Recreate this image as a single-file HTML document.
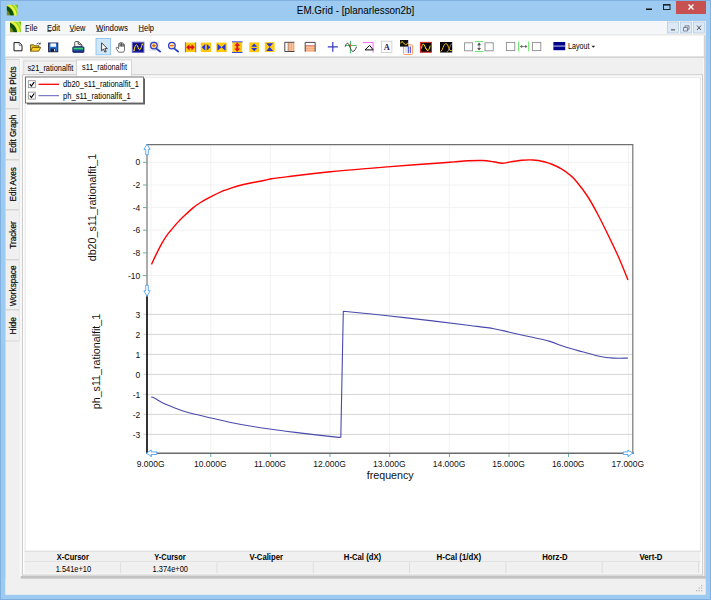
<!DOCTYPE html>
<html><head><meta charset="utf-8"><title>EM.Grid - [planarlesson2b]</title>
<style>
html,body{margin:0;padding:0;background:#9ccaf1;overflow:hidden}
svg{display:block}
text{font-family:"Liberation Sans",sans-serif;fill:#000}
.ui{font-size:8.6px}
.ax{font-size:8.5px;fill:#111}
.lb{font-size:10.7px;fill:#111}
.b{font-weight:bold}
</style></head><body>
<svg width="711" height="600" viewBox="0 0 711 600">

<rect x="0" y="0" width="711" height="600" fill="#9ccaf1"/>
<rect x="0.5" y="0.5" width="710" height="599" fill="none" stroke="#7fb0e0" stroke-width="1"/>
<rect x="5.5" y="21" width="700" height="573.5" fill="#f0f0f0"/>
<text x="296.8" y="14.3" font-size="10.2" fill="#2a2a2a" textLength="117.5" lengthAdjust="spacingAndGlyphs">EM.Grid - [planarlesson2b]</text>
<rect x="676" y="1" width="30" height="13" fill="#c75050"/>
<path d="M688.5 4.5l5 5m0-5l-5 5" stroke="#fff" stroke-width="1.4" fill="none"/>
<rect x="663.5" y="4.5" width="6.5" height="5" fill="none" stroke="#222" stroke-width="1"/><rect x="663.5" y="4.2" width="6.5" height="1.4" fill="#222"/>
<rect x="646" y="8.5" width="6" height="1.5" fill="#111"/>
<rect x="5.5" y="21" width="700" height="14" fill="#f5f6f7"/><rect x="5.5" y="34.5" width="700" height="1.1" fill="#dcdcdc"/>
<rect x="5.5" y="35.5" width="699" height="21.5" fill="#fff"/>
<rect x="5.5" y="56.5" width="700" height="1.2" fill="#c8c8c8"/><rect x="703.8" y="35.5" width="1.4" height="22" fill="#d0d0d0"/>
<text class="ui" x="25" y="30.7" fill="#1a1a1a" textLength="12.5" lengthAdjust="spacingAndGlyphs">File</text>
<rect x="25.3" y="31.3" width="3.6" height="0.7" fill="#333"/>
<text class="ui" x="47" y="30.7" fill="#1a1a1a" textLength="13" lengthAdjust="spacingAndGlyphs">Edit</text>
<rect x="47.3" y="31.3" width="3.8" height="0.7" fill="#333"/>
<text class="ui" x="69.5" y="30.7" fill="#1a1a1a" textLength="16" lengthAdjust="spacingAndGlyphs">View</text>
<rect x="69.8" y="31.3" width="4.6" height="0.7" fill="#333"/>
<text class="ui" x="96" y="30.7" fill="#1a1a1a" textLength="32" lengthAdjust="spacingAndGlyphs">Windows</text>
<rect x="96.3" y="31.3" width="7.2" height="0.7" fill="#333"/>
<text class="ui" x="138.5" y="30.7" fill="#1a1a1a" textLength="15.5" lengthAdjust="spacingAndGlyphs">Help</text>
<rect x="138.8" y="31.3" width="5" height="0.7" fill="#333"/>
<rect x="667.5" y="22" width="11" height="11" fill="#dbe8f5" stroke="#b9cde0" stroke-width="0.8"/>
<rect x="680.5" y="22" width="11" height="11" fill="#dbe8f5" stroke="#b9cde0" stroke-width="0.8"/>
<rect x="693.5" y="22" width="11" height="11" fill="#dbe8f5" stroke="#b9cde0" stroke-width="0.8"/>
<rect x="671" y="29.3" width="4" height="1.1" fill="#555"/>
<path d="M683.5 27.5h4v3.5h-4zM685 27.5v-1.7h4v3.5h-1.5" fill="none" stroke="#667" stroke-width="0.75"/>
<path d="M697 25.5l4 4.5m0-4.5l-4 4.5" stroke="#555" stroke-width="1" fill="none"/>
<rect x="5.5" y="59.5" width="14" height="49.0" fill="#f0f0f0" stroke="#d2d2d2" stroke-width="0.8"/>
<text class="ui" transform="translate(16,101.25) rotate(-90)" font-size="9" fill="#111" stroke="#111" stroke-width="0.2" textLength="35" lengthAdjust="spacingAndGlyphs">Edit Plots</text>
<rect x="5.5" y="109" width="14" height="50.5" fill="#f0f0f0" stroke="#d2d2d2" stroke-width="0.8"/>
<text class="ui" transform="translate(16,153.1) rotate(-90)" font-size="9" fill="#111" stroke="#111" stroke-width="0.2" textLength="38.4" lengthAdjust="spacingAndGlyphs">Edit Graph</text>
<rect x="5.5" y="160" width="14" height="49.5" fill="#f0f0f0" stroke="#d2d2d2" stroke-width="0.8"/>
<text class="ui" transform="translate(16,201.4) rotate(-90)" font-size="9" fill="#111" stroke="#111" stroke-width="0.2" textLength="34.2" lengthAdjust="spacingAndGlyphs">Edit Axes</text>
<rect x="5.5" y="210" width="14" height="49.5" fill="#f0f0f0" stroke="#d2d2d2" stroke-width="0.8"/>
<text class="ui" transform="translate(16,248.75) rotate(-90)" font-size="9" fill="#111" stroke="#111" stroke-width="0.2" textLength="27.5" lengthAdjust="spacingAndGlyphs">Tracker</text>
<rect x="5.5" y="260" width="14" height="49.5" fill="#f0f0f0" stroke="#d2d2d2" stroke-width="0.8"/>
<text class="ui" transform="translate(16,306.25) rotate(-90)" font-size="9" fill="#111" stroke="#111" stroke-width="0.2" textLength="40.7" lengthAdjust="spacingAndGlyphs">Workspace</text>
<rect x="5.5" y="310" width="14" height="31" fill="#f0f0f0" stroke="#d2d2d2" stroke-width="0.8"/>
<text class="ui" transform="translate(16,334.5) rotate(-90)" font-size="9" fill="#111" stroke="#111" stroke-width="0.2" textLength="17.5" lengthAdjust="spacingAndGlyphs">Hide</text>
<rect x="19.6" y="58" width="686" height="518" fill="#f0f0f0"/>
<rect x="19.8" y="58" width="2.2" height="518" fill="#f9f9f9"/>
<rect x="703.2" y="58" width="1.3" height="518" fill="#fafafa"/>
<rect x="704.4" y="57.5" width="1.2" height="521.5" fill="#c2c2c2"/>
<rect x="23.8" y="61" width="53" height="14" fill="#f0f0f0" stroke="#d6d6d6" stroke-width="0.9"/>
<rect x="22.4" y="74.8" width="680.2" height="500.2" fill="#fff" stroke="#c6c6c6" stroke-width="0.9"/>
<rect x="25.1" y="77.2" width="675.4" height="474" fill="#fff" stroke="#e6e6e6" stroke-width="1"/>
<rect x="76.6" y="59.9" width="54.8" height="16" fill="#fff" stroke="#cfcfcf" stroke-width="0.9"/><rect x="77.1" y="74" width="53.8" height="2.6" fill="#fff"/>
<text class="ui" x="27.4" y="70.7" font-size="7.1" fill="#222" textLength="46" lengthAdjust="spacingAndGlyphs">s21_rationalfit</text>
<text class="ui" x="82" y="69.8" font-size="7.1" fill="#111" textLength="45" lengthAdjust="spacingAndGlyphs">s11_rationalfit</text>
<rect x="27" y="78.5" width="118" height="26" fill="#3a3a3a" opacity="0.8"/>
<rect x="25.5" y="77" width="118" height="26" fill="#fff" stroke="#666" stroke-width="0.9"/>
<rect x="28.3" y="80.7" width="7" height="7" fill="#fff" stroke="#8a8a8a" stroke-width="0.8"/>
<path d="M29.8 84.1 l1.6 2 l2.8 -4" fill="none" stroke="#000" stroke-width="1.2"/>
<line x1="38.5" x2="59" y1="84.3" y2="84.3" stroke="#ff0000" stroke-width="1.3"/>
<text class="ui" x="63" y="87.39999999999999" font-size="7.1" fill="#2a2a2a" textLength="76" lengthAdjust="spacingAndGlyphs">db20_s11_rationalfit_1</text>
<rect x="28.3" y="92.10000000000001" width="7" height="7" fill="#fff" stroke="#8a8a8a" stroke-width="0.8"/>
<path d="M29.8 95.5 l1.6 2 l2.8 -4" fill="none" stroke="#000" stroke-width="1.2"/>
<line x1="38.5" x2="59" y1="95.7" y2="95.7" stroke="#5555bb" stroke-width="0.95"/>
<text class="ui" x="63" y="98.8" font-size="7.1" fill="#2a2a2a" textLength="67.6" lengthAdjust="spacingAndGlyphs">ph_s11_rationalfit_1</text>
<line x1="151.1" x2="151.1" y1="145" y2="453" stroke="#f0f0f0" stroke-width="0.9"/>
<line x1="210.8" x2="210.8" y1="145" y2="453" stroke="#f0f0f0" stroke-width="0.9"/>
<line x1="270.4" x2="270.4" y1="145" y2="453" stroke="#f0f0f0" stroke-width="0.9"/>
<line x1="330.0" x2="330.0" y1="145" y2="453" stroke="#f0f0f0" stroke-width="0.9"/>
<line x1="389.7" x2="389.7" y1="145" y2="453" stroke="#f0f0f0" stroke-width="0.9"/>
<line x1="449.4" x2="449.4" y1="145" y2="453" stroke="#f0f0f0" stroke-width="0.9"/>
<line x1="509.0" x2="509.0" y1="145" y2="453" stroke="#f0f0f0" stroke-width="0.9"/>
<line x1="568.6" x2="568.6" y1="145" y2="453" stroke="#f0f0f0" stroke-width="0.9"/>
<line x1="628.3" x2="628.3" y1="145" y2="453" stroke="#f0f0f0" stroke-width="0.9"/>
<line x1="147" x2="633" y1="162.3" y2="162.3" stroke="#f1f1f1" stroke-width="0.9"/>
<line x1="143" x2="146.5" y1="162.3" y2="162.3" stroke="#4aa9a0" stroke-width="0.9"/>
<line x1="147" x2="633" y1="185.0" y2="185.0" stroke="#f1f1f1" stroke-width="0.9"/>
<line x1="143" x2="146.5" y1="185.0" y2="185.0" stroke="#4aa9a0" stroke-width="0.9"/>
<line x1="147" x2="633" y1="207.6" y2="207.6" stroke="#f1f1f1" stroke-width="0.9"/>
<line x1="143" x2="146.5" y1="207.6" y2="207.6" stroke="#4aa9a0" stroke-width="0.9"/>
<line x1="147" x2="633" y1="230.2" y2="230.2" stroke="#f1f1f1" stroke-width="0.9"/>
<line x1="143" x2="146.5" y1="230.2" y2="230.2" stroke="#4aa9a0" stroke-width="0.9"/>
<line x1="147" x2="633" y1="252.9" y2="252.9" stroke="#f1f1f1" stroke-width="0.9"/>
<line x1="143" x2="146.5" y1="252.9" y2="252.9" stroke="#4aa9a0" stroke-width="0.9"/>
<line x1="147" x2="633" y1="275.6" y2="275.6" stroke="#f1f1f1" stroke-width="0.9"/>
<line x1="143" x2="146.5" y1="275.6" y2="275.6" stroke="#4aa9a0" stroke-width="0.9"/>
<line x1="143.5" x2="633" y1="314.4" y2="314.4" stroke="#cfcfcf" stroke-width="0.9"/>
<line x1="143.5" x2="633" y1="334.4" y2="334.4" stroke="#cfcfcf" stroke-width="0.9"/>
<line x1="143.5" x2="633" y1="354.4" y2="354.4" stroke="#cfcfcf" stroke-width="0.9"/>
<line x1="143.5" x2="633" y1="374.4" y2="374.4" stroke="#cfcfcf" stroke-width="0.9"/>
<line x1="143.5" x2="633" y1="394.4" y2="394.4" stroke="#cfcfcf" stroke-width="0.9"/>
<line x1="143.5" x2="633" y1="414.4" y2="414.4" stroke="#cfcfcf" stroke-width="0.9"/>
<line x1="143.5" x2="633" y1="434.4" y2="434.4" stroke="#cfcfcf" stroke-width="0.9"/>
<path d="M147 297 V144.6 H632.8 V453" fill="none" stroke="#707070" stroke-width="1.15"/>
<line x1="147" x2="147" y1="296.5" y2="453.5" stroke="#000" stroke-width="1.6"/>
<line x1="146.2" x2="633.8" y1="453.2" y2="453.2" stroke="#6a6a6a" stroke-width="1.5"/>
<line x1="151.1" x2="151.1" y1="454" y2="457" stroke="#4aa9a0" stroke-width="0.9"/>
<line x1="210.8" x2="210.8" y1="454" y2="457" stroke="#4aa9a0" stroke-width="0.9"/>
<line x1="270.4" x2="270.4" y1="454" y2="457" stroke="#4aa9a0" stroke-width="0.9"/>
<line x1="330.0" x2="330.0" y1="454" y2="457" stroke="#4aa9a0" stroke-width="0.9"/>
<line x1="389.7" x2="389.7" y1="454" y2="457" stroke="#4aa9a0" stroke-width="0.9"/>
<line x1="449.4" x2="449.4" y1="454" y2="457" stroke="#4aa9a0" stroke-width="0.9"/>
<line x1="509.0" x2="509.0" y1="454" y2="457" stroke="#4aa9a0" stroke-width="0.9"/>
<line x1="568.6" x2="568.6" y1="454" y2="457" stroke="#4aa9a0" stroke-width="0.9"/>
<line x1="628.3" x2="628.3" y1="454" y2="457" stroke="#4aa9a0" stroke-width="0.9"/>
<text class="ax" x="140.3" y="165.4" text-anchor="end">0</text>
<text class="ax" x="140.3" y="188.1" text-anchor="end">-2</text>
<text class="ax" x="140.3" y="210.7" text-anchor="end">-4</text>
<text class="ax" x="140.3" y="233.3" text-anchor="end">-6</text>
<text class="ax" x="140.3" y="256.0" text-anchor="end">-8</text>
<text class="ax" x="140.3" y="278.7" text-anchor="end">-10</text>
<text class="ax" x="140.3" y="317.5" text-anchor="end">3</text>
<text class="ax" x="140.3" y="337.5" text-anchor="end">2</text>
<text class="ax" x="140.3" y="357.5" text-anchor="end">1</text>
<text class="ax" x="140.3" y="377.5" text-anchor="end">0</text>
<text class="ax" x="140.3" y="397.5" text-anchor="end">-1</text>
<text class="ax" x="140.3" y="417.5" text-anchor="end">-2</text>
<text class="ax" x="140.3" y="437.5" text-anchor="end">-3</text>
<text class="ax" x="150.7" y="466.9" text-anchor="middle">9.000G</text>
<text class="ax" x="210.3" y="466.9" text-anchor="middle">10.000G</text>
<text class="ax" x="270.0" y="466.9" text-anchor="middle">11.000G</text>
<text class="ax" x="329.6" y="466.9" text-anchor="middle">12.000G</text>
<text class="ax" x="389.3" y="466.9" text-anchor="middle">13.000G</text>
<text class="ax" x="449.0" y="466.9" text-anchor="middle">14.000G</text>
<text class="ax" x="508.6" y="466.9" text-anchor="middle">15.000G</text>
<text class="ax" x="568.2" y="466.9" text-anchor="middle">16.000G</text>
<text class="ax" x="627.9" y="466.9" text-anchor="middle">17.000G</text>
<text class="lb" x="390.2" y="479.3" text-anchor="middle" font-size="11.4">frequency</text>
<text class="lb" transform="translate(96,207.6) rotate(-90)" text-anchor="middle">db20_s11_rationalfit_1</text>
<text class="lb" transform="translate(99.9,361.5) rotate(-90)" text-anchor="middle">ph_s11_rationalfit_1</text>
<path d="M151.50 264.40 C152.22 262.85 154.17 258.45 155.80 255.10 C157.43 251.75 159.48 247.55 161.30 244.30 C163.12 241.05 165.08 237.95 166.70 235.60 C168.32 233.25 169.20 232.37 171.00 230.20 C172.80 228.03 175.33 224.95 177.50 222.60 C179.67 220.25 181.47 218.52 184.00 216.10 C186.53 213.68 189.82 210.45 192.70 208.10 C195.58 205.75 198.23 203.92 201.30 202.00 C204.37 200.08 207.85 198.30 211.10 196.60 C214.35 194.90 217.37 193.25 220.80 191.80 C224.23 190.35 228.08 189.08 231.70 187.90 C235.32 186.72 238.90 185.60 242.50 184.70 C246.10 183.80 249.55 183.23 253.30 182.50 C257.05 181.77 262.00 180.92 265.00 180.30 C268.00 179.68 267.45 179.42 271.30 178.80 C275.15 178.18 278.27 177.77 288.10 176.60 C297.93 175.43 316.23 173.22 330.30 171.80 C344.37 170.38 358.43 169.27 372.50 168.10 C386.57 166.93 403.45 165.65 414.70 164.80 C425.95 163.95 433.45 163.48 440.00 163.00 C446.55 162.52 449.32 162.27 454.00 161.90 C458.68 161.53 463.40 161.03 468.10 160.80 C472.80 160.57 477.98 160.35 482.20 160.50 C486.42 160.65 490.12 161.23 493.40 161.70 C496.68 162.17 499.08 163.27 501.90 163.30 C504.72 163.33 507.02 162.40 510.30 161.90 C513.58 161.40 517.85 160.62 521.60 160.30 C525.35 159.98 529.05 159.77 532.80 160.00 C536.55 160.23 540.82 160.95 544.10 161.70 C547.38 162.45 549.68 163.33 552.50 164.50 C555.32 165.67 558.08 166.95 561.00 168.70 C563.92 170.45 567.46 172.91 570.00 175.00 C572.54 177.09 573.33 177.71 576.25 181.25 C579.17 184.79 583.96 190.83 587.50 196.25 C591.04 201.67 593.96 207.08 597.50 213.75 C601.04 220.42 605.21 228.96 608.75 236.25 C612.29 243.54 615.54 250.21 618.75 257.50 C621.96 264.79 626.46 276.25 628.00 280.00" fill="none" stroke="#ff0000" stroke-width="1.4" stroke-linejoin="round"/>
<path d="M151.20 396.90 C151.80 397.13 153.02 397.37 154.80 398.30 C156.58 399.23 158.85 401.00 161.90 402.50 C164.95 404.00 168.88 405.67 173.10 407.30 C177.32 408.93 180.87 410.52 187.20 412.30 C193.53 414.08 204.07 416.35 211.10 418.00 C218.13 419.65 221.67 420.65 229.40 422.20 C237.13 423.75 248.13 425.80 257.50 427.30 C266.87 428.80 276.22 429.98 285.60 431.20 C294.98 432.42 305.35 433.62 313.80 434.60 C322.25 435.58 331.80 436.65 336.30 437.10 C340.80 437.55 340.05 437.27 340.80 437.30 L343.30 311.20 C350.67 311.95 372.63 314.08 387.50 315.70 C402.37 317.32 418.75 319.27 432.50 320.90 C446.25 322.53 459.77 324.20 470.00 325.50 C480.23 326.80 487.32 327.58 493.90 328.70 C500.48 329.82 503.52 330.85 509.50 332.20 C515.48 333.55 523.23 335.32 529.80 336.80 C536.37 338.28 542.93 339.38 548.90 341.10 C554.87 342.82 560.02 345.32 565.60 347.10 C571.18 348.88 576.82 350.28 582.40 351.80 C587.98 353.32 593.92 355.15 599.10 356.20 C604.28 357.25 608.72 357.78 613.50 358.10 C618.28 358.42 625.42 358.10 627.80 358.10" fill="none" stroke="#4a4aac" stroke-width="1.1" stroke-linejoin="round"/>
<path d="M147 144.2 l3.1 5.2 h-1.8 v5.4 h-2.6 v-5.4 h-1.8z" fill="#fff" stroke="#3c96f5" stroke-width="0.8"/>
<path d="M147 296.2 l3.1 -5.4 h-1.8 v-5.6 h-2.6 v5.6 h-1.8z" fill="#fff" stroke="#3c96f5" stroke-width="0.8"/>
<path d="M146.3 453.2 l5 -3.1 v1.8 h5.5 v2.6 h-5.5 v1.8z" fill="#fff" stroke="#3c96f5" stroke-width="0.8"/>
<path d="M633 453.2 l-5 -3.1 v1.8 h-4.8 v2.6 h4.8 v1.8z" fill="#fff" stroke="#3c96f5" stroke-width="0.8"/>
<rect x="24.4" y="551.2" width="676.2" height="22.4" fill="#f0f0f0"/>
<rect x="24.4" y="561.1" width="676.2" height="0.9" fill="#e0e0e0"/>
<rect x="24.4" y="550.8" width="676.2" height="0.9" fill="#dadada"/>
<text class="ui b" x="56.8" y="559.8" font-size="8.2" fill="#222" textLength="32" lengthAdjust="spacingAndGlyphs">X-Cursor</text>
<rect x="120.2" y="562.3" width="0.9" height="11" fill="#dcdcdc"/>
<text class="ui b" x="154.3" y="559.8" font-size="8.2" fill="#222" textLength="31.4" lengthAdjust="spacingAndGlyphs">Y-Cursor</text>
<rect x="216.5" y="562.3" width="0.9" height="11" fill="#dcdcdc"/>
<text class="ui b" x="249.6" y="559.8" font-size="8.2" fill="#222" textLength="33.4" lengthAdjust="spacingAndGlyphs">V-Caliper</text>
<rect x="312.8" y="562.3" width="0.9" height="11" fill="#dcdcdc"/>
<text class="ui b" x="343.8" y="559.8" font-size="8.2" fill="#222" textLength="37.4" lengthAdjust="spacingAndGlyphs">H-Cal (dX)</text>
<rect x="409.1" y="562.3" width="0.9" height="11" fill="#dcdcdc"/>
<text class="ui b" x="436.6" y="559.8" font-size="8.2" fill="#222" textLength="44.6" lengthAdjust="spacingAndGlyphs">H-Cal (1/dX)</text>
<rect x="505.4" y="562.3" width="0.9" height="11" fill="#dcdcdc"/>
<text class="ui b" x="542.2" y="559.8" font-size="8.2" fill="#222" textLength="25.4" lengthAdjust="spacingAndGlyphs">Horz-D</text>
<rect x="601.7" y="562.3" width="0.9" height="11" fill="#dcdcdc"/>
<text class="ui b" x="639.5" y="559.8" font-size="8.2" fill="#222" textLength="23" lengthAdjust="spacingAndGlyphs">Vert-D</text>
<rect x="698.0" y="562.3" width="0.9" height="11" fill="#dcdcdc"/>
<text class="ui" x="55.7" y="571.8" font-size="8.6" textLength="35.4" lengthAdjust="spacingAndGlyphs">1.541e+10</text>
<text class="ui" x="152.6" y="571.8" font-size="8.6" textLength="35.4" lengthAdjust="spacingAndGlyphs">1.374e+00</text>
<rect x="20.8" y="575.9" width="684.8" height="2.9" fill="#c2c2c2"/>
<rect x="5.5" y="578.8" width="700" height="15.8" fill="#f0f0f0"/>
<g fill="#bdbdbd"><rect x="701" y="590" width="1.3" height="1.3"/><rect x="698.5" y="590" width="1.3" height="1.3"/><rect x="701" y="587.5" width="1.3" height="1.3"/><rect x="696" y="590" width="1.3" height="1.3"/><rect x="698.5" y="587.5" width="1.3" height="1.3"/><rect x="701" y="585" width="1.3" height="1.3"/></g>
<defs><radialGradient id="lg" gradientUnits="userSpaceOnUse" cx="-4" cy="11.5" r="19"><stop offset="0" stop-color="#9aa428"/><stop offset="0.36" stop-color="#6f8418"/><stop offset="0.43" stop-color="#0c4a10"/><stop offset="0.56" stop-color="#0a5210"/><stop offset="0.61" stop-color="#d8ea2c"/><stop offset="0.70" stop-color="#f6f84a"/><stop offset="0.76" stop-color="#8ed21a"/><stop offset="0.84" stop-color="#c4ee58"/><stop offset="0.90" stop-color="#7cc814"/><stop offset="1" stop-color="#5eb00c"/></radialGradient></defs>
<g transform="translate(6.8,4.8)"><rect x="0" y="0" width="11" height="10.6" fill="url(#lg)"/></g>
<g transform="translate(10,21.6)"><rect x="0" y="0" width="11" height="10.6" fill="url(#lg)"/></g>
<rect x="96" y="38.5" width="14.6" height="16.3" fill="#cde6f8" stroke="#8fc3ee" stroke-width="0.9"/>
<path d="M14 42.6h5.4l2.6 2.6v5.6h-8z" fill="#fff" stroke="#1a1a1a" stroke-width="1"/><path d="M19.2 42.8v2.6h2.6" fill="none" stroke="#555" stroke-width="0.7"/>
<path d="M30.5 51.2v-6.4h3.2l1 1h4.3v1.6" fill="#f0c010" stroke="#5a4708" stroke-width="0.8"/><path d="M30.5 51.2l2-3.8h8.3l-2.2 3.8z" fill="#ffd428" stroke="#5a4708" stroke-width="0.8"/><path d="M36.5 44q2-1.8 3.6-0.3m0.2-1.2v1.6h-1.6" fill="none" stroke="#333" stroke-width="0.7"/>
<rect x="48.6" y="43" width="9.2" height="8.8" fill="#2a6fd0" stroke="#101840" stroke-width="0.9"/><rect x="50.4" y="43.4" width="5.6" height="3.4" fill="#f2f6ff"/><rect x="50.6" y="48.6" width="5" height="3" fill="#1a1a30"/><rect x="54" y="49.2" width="1.2" height="2" fill="#e8e8f0"/>
<path d="M74.7 46.8v-4.3q0-1 1-1h2.6l3.7 3.4v1.9z" fill="#f2f2f2" stroke="#3a3a3a" stroke-width="0.8"/><path d="M78.2 41.8v2.2l3.4 1.2" fill="none" stroke="#222" stroke-width="0.8"/><rect x="72.7" y="46.8" width="11.3" height="5.7" rx="0.9" fill="#1c2c92" stroke="#16205a" stroke-width="0.7"/><rect x="73.5" y="47.6" width="9.7" height="1.6" fill="#34d674"/><rect x="73.5" y="49.2" width="9.7" height="1.2" fill="#1f8a80"/>
<path d="M101.6 42.8v8l1.9-1.7 1.4 3 1.3-0.6-1.4-2.9h2.5z" fill="#fff" stroke="#222" stroke-width="0.85" stroke-linejoin="round"/>
<path d="M118.6 52.2l-2.3-3.5q-0.6-1.2 0.3-1.5t1.7 1l0.3 0.5v-4.6a0.75 0.75 0 0 1 1.5 0v2.4v-3.4a0.75 0.75 0 0 1 1.5 0v3.4v-3a0.75 0.75 0 0 1 1.5 0v3.2v-2a0.7 0.7 0 0 1 1.4 0v4.3q0 2-1 3.2z" fill="#fff" stroke="#333" stroke-width="0.7" stroke-linejoin="round"/>
<rect x="132.3" y="42.2" width="11.6" height="10.2" fill="#10108a" stroke="#6a6ac8" stroke-width="1"/><path d="M134 50.2c0.8-3 1.4-5.4 2.4-5.4c1.4 0 1.8 5 3.2 5c1.2 0 1.6-3 2.6-5.4" fill="none" stroke="#ffe000" stroke-width="1"/><circle cx="134" cy="50.5" r="0.8" fill="#ffd000"/><circle cx="142.3" cy="44.3" r="0.8" fill="#ffd000"/>
<rect x="149.3" y="41.3" width="10.2" height="9.6" fill="#e6e6e6"/>
<line x1="156.3" y1="48.6" x2="160.7" y2="52" stroke="#2233cc" stroke-width="1.6"/>
<line x1="156.0" y1="48.2" x2="157.5" y2="49.4" stroke="#30a040" stroke-width="1.2"/>
<circle cx="153.9" cy="45.6" r="3.3" fill="#ffe9a0" stroke="#2a3ad0" stroke-width="1.3"/>
<rect x="152.1" y="45.1" width="3.6" height="1.1" fill="#e85000"/>
<rect x="153.35" y="43.8" width="1.1" height="3.6" fill="#e85000"/>
<line x1="174.3" y1="48.6" x2="178.7" y2="52" stroke="#2233cc" stroke-width="1.6"/>
<line x1="174.0" y1="48.2" x2="175.5" y2="49.4" stroke="#30a040" stroke-width="1.2"/>
<circle cx="171.9" cy="45.6" r="3.3" fill="#ffe9a0" stroke="#2a3ad0" stroke-width="1.3"/>
<rect x="170.1" y="45.1" width="3.6" height="1.1" fill="#e85000"/>
<rect x="185.2" y="42.6" width="10.6" height="9.4" fill="#ffc90e"/><rect x="184.9" y="42.2" width="0.8" height="10.2" fill="#2233dd" opacity="0.8"/><rect x="195.4" y="42.2" width="0.8" height="10.2" fill="#2233dd" opacity="0.8"/>
<path d="M186.2 47.3l3.3-3.1v2.1h2v-2.1l3.3 3.1l-3.3 3.1v-2.1h-2v2.1z" fill="#dd1122"/>
<rect x="200.8" y="42.6" width="10.4" height="9.4" fill="#ffc90e"/><path d="M201.7 47.3l3.6-3.3v6.6zM210.4 47.3l-3.6-3.3v6.6z" fill="#2233dd"/>
<rect x="216.3" y="42.6" width="10.4" height="9.4" fill="#ffc90e"/><path d="M217.5 43.8l4 3.5l-4 3.5zM225.5 43.8l-4 3.5l4 3.5z" fill="#2233dd"/>
<rect x="232.4" y="42" width="9.8" height="10.4" fill="#ffc90e"/><rect x="232" y="41.4" width="10.6" height="0.9" fill="#2233dd"/><rect x="232" y="52" width="10.6" height="0.9" fill="#2233dd"/>
<path d="M237.3 42.6l2.9 3.2h-1.9v2.8h1.9l-2.9 3.2l-2.9-3.2h1.9v-2.8h-1.9z" fill="#dd1122"/>
<rect x="249.3" y="42.4" width="9.8" height="9.8" fill="#ffc90e"/><path d="M254.2 43.4l3 3.3h-6zM254.2 51.2l3-3.3h-6z" fill="#2233dd"/>
<rect x="264.8" y="42.2" width="9.8" height="9.8" fill="#ffc90e"/><path d="M266.2 43.2h7l-3.5 3.9zM266.2 51h7l-3.5-3.9z" fill="#2233dd"/>
<rect x="288" y="42.6" width="6.4" height="8.8" fill="#f4a878"/><path d="M290.2 42.6v8.8M292.3 42.6v8.8" stroke="#fbd4b8" stroke-width="0.7"/><rect x="285" y="42.6" width="3" height="8.8" fill="#fff"/><path d="M294.4 42.3h-9.6v9.2h9.6" fill="none" stroke="#333" stroke-width="0.9"/><line x1="288" x2="288" y1="42.6" y2="51.4" stroke="#777" stroke-width="0.6"/>
<rect x="305.4" y="45.6" width="9.6" height="6" fill="#f4a878"/><path d="M305.4 47.6h9.6M305.4 49.6h9.6" stroke="#fbd4b8" stroke-width="0.6"/><rect x="305.4" y="42.8" width="9.6" height="2.6" fill="#fff"/><path d="M305.2 51.6v-9.2h10v9.2" fill="none" stroke="#333" stroke-width="0.9"/><line x1="305.4" x2="315" y1="45.5" y2="45.5" stroke="#b55" stroke-width="0.6"/>
<path d="M332.8 42v9.8M327.8 46.9h10" stroke="#3838c0" stroke-width="1.2" fill="none"/>
<path d="M350.4 40.8v12.6M345 45.4h11.6" stroke="#22b050" stroke-width="0.9" fill="none"/><path d="M345 46.8c1-3 2.4-4.6 3.6-2.8c1.4 2 2.2 7.4 4.4 7.4c1.6 0 2.6-2.4 3.6-4.8" fill="none" stroke="#333" stroke-width="0.9"/><circle cx="350.4" cy="45.4" r="0.9" fill="#f04020"/>
<path d="M362.8 42.6h10.3v10" fill="none" stroke="#ff50ff" stroke-width="0.9"/><path d="M365 49.9l4.6-4.5l3.6 4.5z" fill="none" stroke="#111" stroke-width="1"/>
<rect x="381.5" y="41.2" width="10.4" height="11.2" fill="#fff" stroke="#c8c8c8" stroke-width="0.8"/><text x="386.7" y="50" text-anchor="middle" style="font-family:'Liberation Serif',serif;font-weight:bold;font-size:8.4px;fill:#1a2060">A</text>
<rect x="403.6" y="44.9" width="9" height="9.6" rx="1" fill="#fff" stroke="#ff9040" stroke-width="0.9"/><rect x="405" y="46.5" width="6.4" height="6.6" fill="#dfe3ee"/><path d="M408.4 46.5v6.6M410.4 46.5v6.6" stroke="#3030d0" stroke-width="0.8"/><rect x="400" y="40" width="8.2" height="6.6" fill="#111"/><path d="M400.6 43.4q1.2-3.4 2.6-1t1.4 1.4q1.4 2.6 3-1" fill="none" stroke="#ffd800" stroke-width="0.9"/>
<rect x="420.4" y="42.4" width="11" height="9.8" fill="#080808" stroke="#e02020" stroke-width="1"/><path d="M421.4 48.6q1.4-7.6 3.4-2.6t1.4 2.6q2 5.4 4-3" fill="none" stroke="#ffe000" stroke-width="1"/>
<rect x="440" y="42" width="12.2" height="10.5" fill="#080808"/><path d="M440.6 51.6q1.6-1 2.6-4.4t2.6-3.6q2 0 2.8 4t3.4 3.2" fill="none" stroke="#f0b000" stroke-width="1"/><path d="M447 52q1.6-1 2.4-4t2.4-4.4" fill="none" stroke="#aaa" stroke-width="0.8"/>
<rect x="464.6" y="42.8" width="8" height="8" fill="#fff" stroke="#8c8c8c" stroke-width="0.9"/><rect x="485" y="42.8" width="8.2" height="8" fill="#fff" stroke="#8c8c8c" stroke-width="0.9"/>
<path d="M474.8 41.6h8.6M474.8 51.6h8.6" stroke="#50e050" stroke-width="0.9"/><path d="M479.1 43v7" stroke="#666" stroke-width="0.8"/><path d="M479.1 42.6l2 2.6h-4zM479.1 50.6l2-2.6h-4z" fill="#555"/>
<rect x="506.4" y="42.4" width="8.4" height="8.2" fill="#fff" stroke="#8c8c8c" stroke-width="0.9"/><rect x="532.4" y="42.4" width="8.4" height="8.2" fill="#fff" stroke="#8c8c8c" stroke-width="0.9"/>
<path d="M518.6 41.5v9.8M528.7 41.5v9.8" stroke="#50e050" stroke-width="0.9"/><path d="M520.2 46.5h7" stroke="#666" stroke-width="0.8"/><path d="M520 46.5l2.2-1.8v3.6zM527.4 46.5l-2.2-1.8v3.6z" fill="#666"/>
<rect x="553.4" y="42" width="11.8" height="8.2" fill="#000088"/><rect x="553.4" y="45.6" width="11.8" height="0.9" fill="#e8e8ff"/>
<text class="ui" x="568" y="49.2" font-size="8.4" textLength="21.5" lengthAdjust="spacingAndGlyphs">Layout</text><path d="M591.4 45.7h3.8l-1.9 2.1z" fill="#222"/>
</svg></body></html>
